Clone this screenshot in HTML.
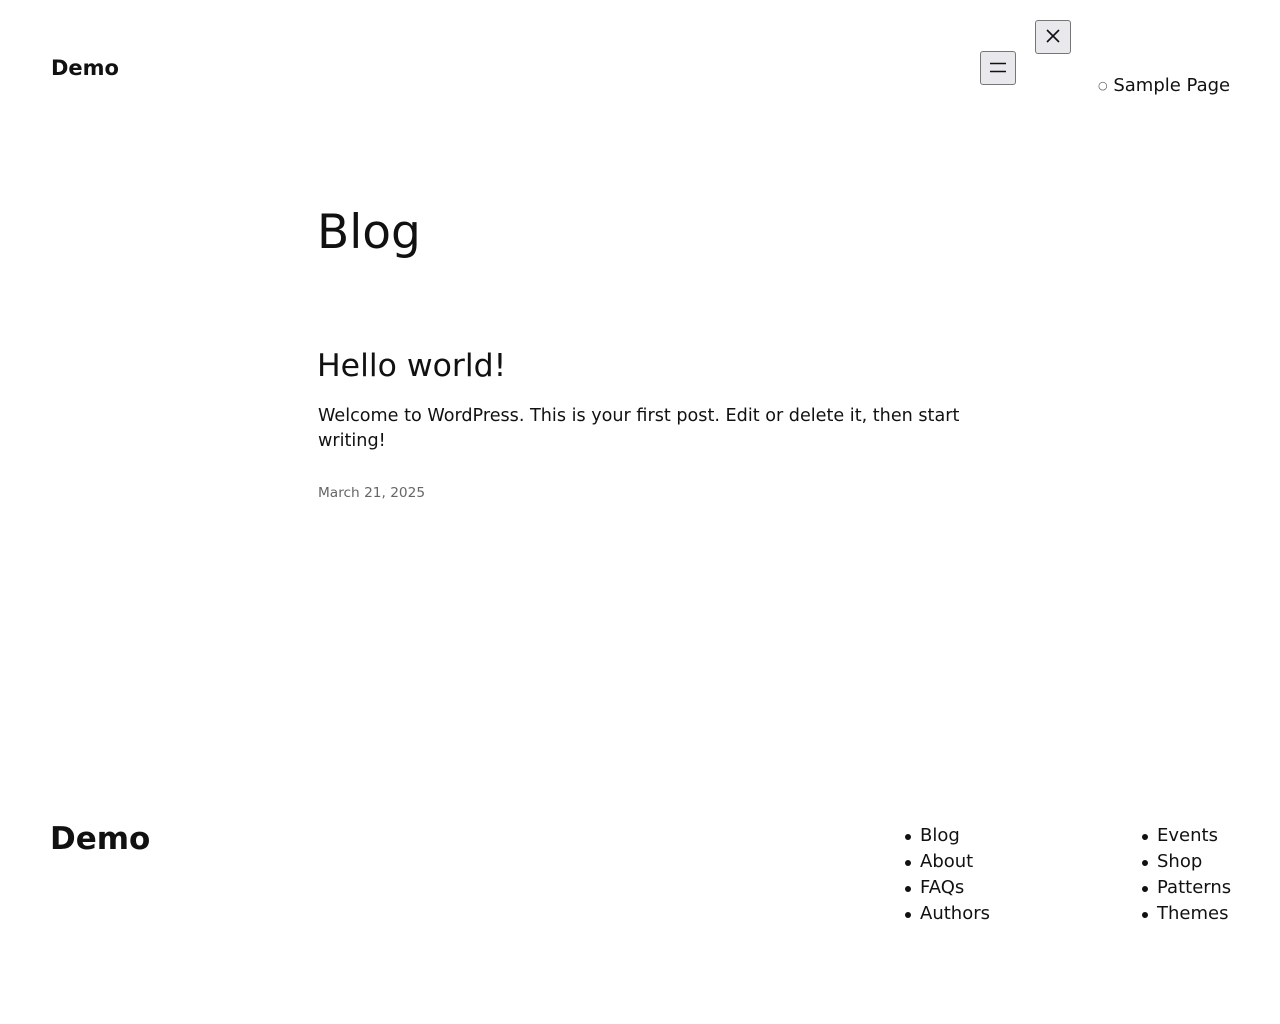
<!DOCTYPE html>
<html><head><style>
body{margin:0;width:1280px;height:1024px;background:#fff;font-family:"DejaVu Sans","Liberation Sans",sans-serif;color:#111;position:relative;overflow:hidden}
.a{position:absolute;white-space:nowrap;margin:0}
.btn{position:absolute;width:36px;height:34px;box-sizing:border-box;border:1px solid #767676;border-radius:3px;background:#e9e9ed}
ul{position:absolute;margin:0;padding:0;list-style:none;font-size:18px;line-height:26px}
li{position:relative;padding-left:16px}
li::before{content:"";position:absolute;left:1px;top:11px;width:6px;height:6px;border-radius:50%;background:#111}
</style></head><body>
<div class="a" style="left:51px;top:56px;font-size:21px;font-weight:bold">Demo</div>
<div class="btn" style="left:980px;top:51px"><svg width="34" height="32" viewBox="0 0 34 32"><path d="M9 11.5h16M9 19.5h16" stroke="#111" stroke-width="1.6"/></svg></div>
<div class="btn" style="left:1035px;top:20px"><svg width="34" height="32" viewBox="0 0 34 32"><path d="M11 9l12 12M23 9L11 21" stroke="#111" stroke-width="1.6"/></svg></div>
<div class="a" style="left:1098px;top:75px;font-size:18px"><span style="font-size:11px;color:#555;position:relative;top:-2px">○</span> Sample Page</div>
<div class="a" style="left:317px;top:205px;font-size:47px">Blog</div>
<div class="a" style="left:317px;top:348px;font-size:31.5px">Hello world!</div>
<div class="a" style="left:318px;top:404px;font-size:17.6px;line-height:25px;white-space:normal;width:670px">Welcome to WordPress. This is your first post. Edit or delete it, then start writing!</div>
<div class="a" style="left:318px;top:485px;font-size:13.7px;color:#666">March 21, 2025</div>
<div class="a" style="left:50px;top:821px;font-size:31px;font-weight:bold">Demo</div>
<ul style="left:904px;top:823px"><li>Blog</li><li>About</li><li>FAQs</li><li>Authors</li></ul>
<ul style="left:1141px;top:823px"><li>Events</li><li>Shop</li><li>Patterns</li><li>Themes</li></ul>
</body></html>
